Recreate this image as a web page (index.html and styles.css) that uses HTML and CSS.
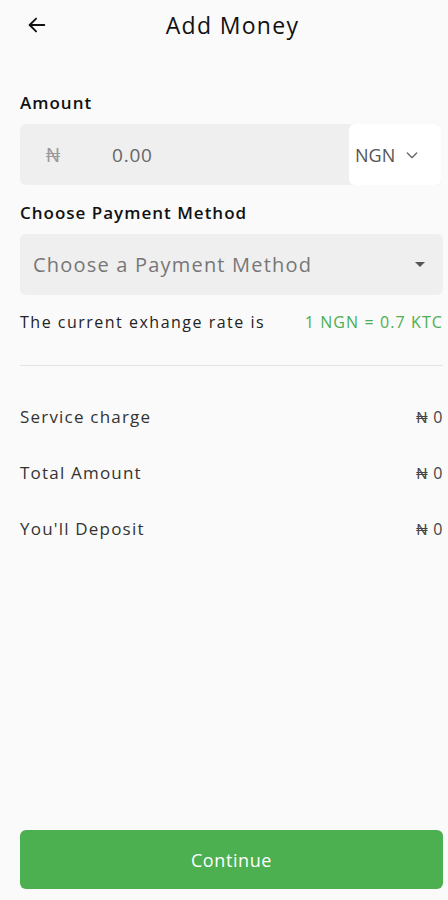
FILE: index.html
```html
<!DOCTYPE html>
<html lang="en">
<head>
  <meta charset="UTF-8">
  <title>Add Money</title>
  <link rel="stylesheet" href="styles.css">
</head>
<body>

<div class="screen">
  <div class="top-bar">
    <button class="back-btn">
      <svg width="22" height="22" viewBox="0 0 24 24" fill="none" stroke="#111" stroke-width="2" stroke-linecap="round" stroke-linejoin="round">
        <path d="M20 12H4"/>
        <path d="M11 5l-7 7 7 7"/>
      </svg>
    </button>
    <div class="title">Add Money</div>
  </div>

  <div class="field-label">Amount</div>
  <div class="amount-box">
    <span class="naira">₦</span>
    <span class="amount-value">0.00</span>
    <div class="currency">
      NGN
      <svg width="16" height="16" viewBox="0 0 24 24" fill="none" stroke="#666" stroke-width="2" stroke-linecap="round" stroke-linejoin="round">
        <path d="M5 9l7 7 7-7"/>
      </svg>
    </div>
  </div>

  <div class="field-label">Choose Payment Method</div>
  <div class="select-box">
    <span>Choose a Payment Method</span>
    <span class="caret"></span>
  </div>

  <div class="rate-row">
    <span>The current exhange rate is</span>
    <span class="rate">1 NGN = 0.7 KTC</span>
  </div>

  <div class="divider"></div>

  <div class="summary">
    <div class="summary-row"><span>Service charge</span><span class="val">₦ 0</span></div>
    <div class="summary-row"><span>Total Amount</span><span class="val">₦ 0</span></div>
    <div class="summary-row"><span>You'll Deposit</span><span class="val">₦ 0</span></div>
  </div>

  <div class="spacer"></div>

  <button class="continue-btn">Continue</button>
</div>

</body>
</html>
```

FILE: styles.css
```css
body {
  margin: 0;
  padding: 0;
  font-family: "Open Sans", "Lato", sans-serif;
  background: #fafafa;
  color: #1a1a1a;
}

.screen {
  height: 900px;
  box-sizing: border-box;
  padding: 0 5px 11px 20px;
  display: flex;
  flex-direction: column;
}

.top-bar {
  height: 50px;
  display: flex;
  align-items: center;
  position: relative;
  margin-bottom: 43px;
}

.back-btn {
  background: none;
  border: none;
  padding: 0;
  margin-left: 6px;
  display: flex;
  cursor: pointer;
}

.title {
  position: absolute;
  left: 0;
  right: 0;
  text-align: center;
  font-size: 23px;
  letter-spacing: 1.3px;
  color: #111;
  pointer-events: none;
  margin-left: 2px;
}

.field-label {
  font-size: 17px;
  line-height: 20px;
  font-weight: 600;
  color: #111;
  margin-bottom: 11px;
  letter-spacing: 1px;
}

.amount-box {
  height: 61px;
  width: 421px;
  background: #efefef;
  border-radius: 6px;
  display: flex;
  align-items: center;
  margin-bottom: 18px;
  overflow: hidden;
}

.naira {
  font-size: 20px;
  color: #9a9a9a;
  margin-left: 25px;
  width: 67px;
}

.amount-value {
  font-size: 19px;
  color: #666;
  flex: 1;
  letter-spacing: 0.8px;
}

.currency {
  height: 100%;
  width: 92px;
  background: #fff;
  border-radius: 6px;
  display: flex;
  align-items: center;
  gap: 9px;
  padding-left: 6px;
  box-sizing: border-box;
  font-size: 18px;
  color: #555;
}

.select-box {
  height: 61px;
  width: 423px;
  background: #efefef;
  border-radius: 6px;
  display: flex;
  align-items: center;
  justify-content: space-between;
  padding: 0 18px 0 13px;
  box-sizing: border-box;
  font-size: 20px;
  color: #777;
  letter-spacing: 1.2px;
  margin-bottom: 17px;
}

.caret {
  width: 0;
  height: 0;
  border-left: 5px solid transparent;
  border-right: 5px solid transparent;
  border-top: 5px solid #555;
}

.rate-row {
  display: flex;
  justify-content: space-between;
  font-size: 16px;
  line-height: 20px;
  color: #222;
  letter-spacing: 1.5px;
}

.rate {
  color: #4caf50;
  letter-spacing: 1.1px;
}

.divider {
  height: 1px;
  background: #e4e4e4;
  width: 423px;
  margin: 33px 0 40px;
}

.summary {
  display: flex;
  flex-direction: column;
  gap: 34px;
}

.summary-row {
  display: flex;
  justify-content: space-between;
  font-size: 17px;
  color: #333;
  letter-spacing: 1.2px;
  line-height: 22px;
}

.summary-row .val {
  color: #444;
  font-size: 16px;
  letter-spacing: 0.5px;
}

.spacer {
  flex: 1;
}

.continue-btn {
  height: 59px;
  width: 423px;
  background: #4caf50;
  color: #fff;
  border: none;
  border-radius: 6px;
  font-family: inherit;
  font-size: 18px;
  font-weight: 500;
  letter-spacing: 0.6px;
  cursor: pointer;
}
```
